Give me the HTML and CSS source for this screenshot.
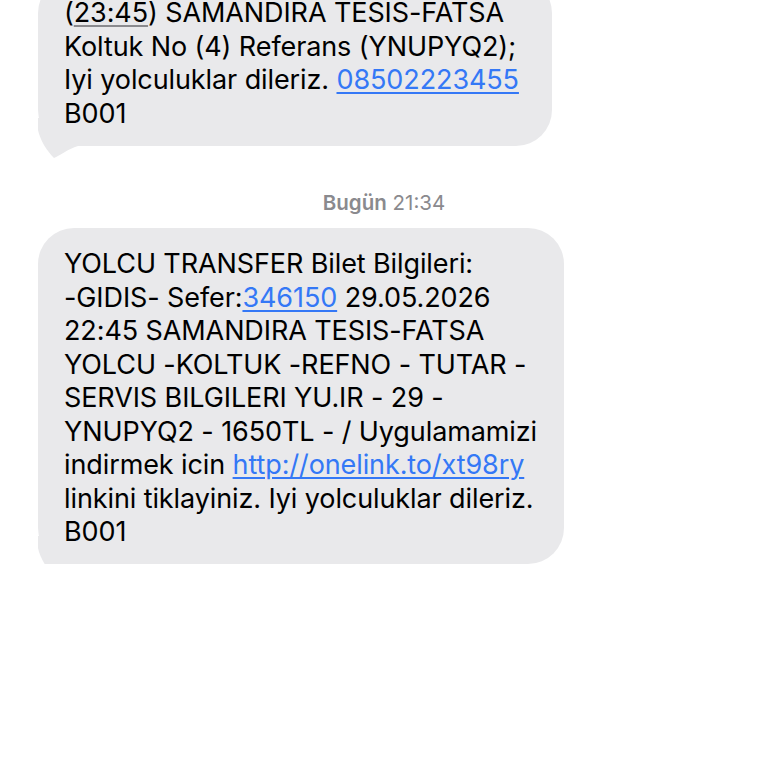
FILE: index.html
```html
<!DOCTYPE html>
<html lang="tr">
  <head>
    <meta charset="UTF-8" />
    <meta name="viewport" content="width=device-width, initial-scale=1.0" />
    <title>Mesajlar</title>
    <link rel="stylesheet" href="styles.css">
  </head>

  <body>
    <div class="thread">
      <div class="row">
        <div class="bubble bubble-wide">
          <svg class="tail" viewBox="0 0 40 40" width="40" height="40">
            <path d="M0 0 L0 12 C2 22 9 33 16 40 C23 37 30 31 40 28 L40 0 Z" />
          </svg>
          <p class="text">
            (<span class="date">23:45</span>) SAMANDIRA TESIS-FATSA<br />
            Koltuk No (4) Referans (YNUPYQ2);<br />
            Iyi yolculuklar dileriz. <a href="tel:08502223455">08502223455</a><br />
            B001
          </p>
        </div>
      </div>

      <div class="stamp"><b>Bugün</b> 21:34</div>

      <div class="row">
        <div class="bubble">
          <svg class="tail" viewBox="0 0 40 40" width="40" height="40">
            <path d="M0 0 L0 12 C2 22 9 33 16 40 C23 37 30 31 40 28 L40 0 Z" />
          </svg>
          <p class="text">
            YOLCU TRANSFER Bilet Bilgileri:<br />
            -GIDIS- Sefer:<a href="#">346150</a> 29.05.2026<br />
            22:45 SAMANDIRA TESIS-FATSA<br />
            YOLCU -KOLTUK -REFNO - TUTAR -<br />
            SERVIS BILGILERI YU.IR - 29 -<br />
            YNUPYQ2 - 1650TL - / Uygulamamizi<br />
            indirmek icin <a href="http://onelink.to/xt98ry">http://onelink.to/xt98ry</a><br />
            linkini tiklayiniz. Iyi yolculuklar dileriz.<br />
            B001
          </p>
        </div>
      </div>
    </div>
  </body>
</html>
```

FILE: styles.css
```css
body {
  margin: 0;
  background: #fff;
  font-family: Inter, "Noto Sans", sans-serif;
  overflow: hidden;
}

.thread {
  margin-top: -23px;
  padding: 0 38px;
}

.row {
  display: flex;
}

.bubble {
  position: relative;
  background-color: #e9e9eb;
  color: #000;
  border-radius: 36px;
  padding: 19px 27px 15px 26px;
  font-size: 27px;
  line-height: 33.5px;
  letter-spacing: -0.1px;
  white-space: nowrap;
}

.bubble-wide {
  padding-right: 33px;
  padding-bottom: 16px;
}

.text {
  position: relative;
  margin: 0;
}

.bubble a {
  color: #3478f6;
  text-decoration: underline;
  text-underline-offset: 3px;
  text-decoration-thickness: 1.5px;
}

.bubble .date {
  text-decoration: underline;
  text-decoration-color: #8a8a8e;
  text-underline-offset: 3px;
  text-decoration-thickness: 1.5px;
}

.tail {
  position: absolute;
  left: 0;
  bottom: -12px;
  fill: #e9e9eb;
}

.stamp {
  text-align: center;
  color: #8a8a8e;
  font-size: 20.5px;
  margin: 44px 0 13px;
}

.stamp b {
  font-weight: 600;
}
```
